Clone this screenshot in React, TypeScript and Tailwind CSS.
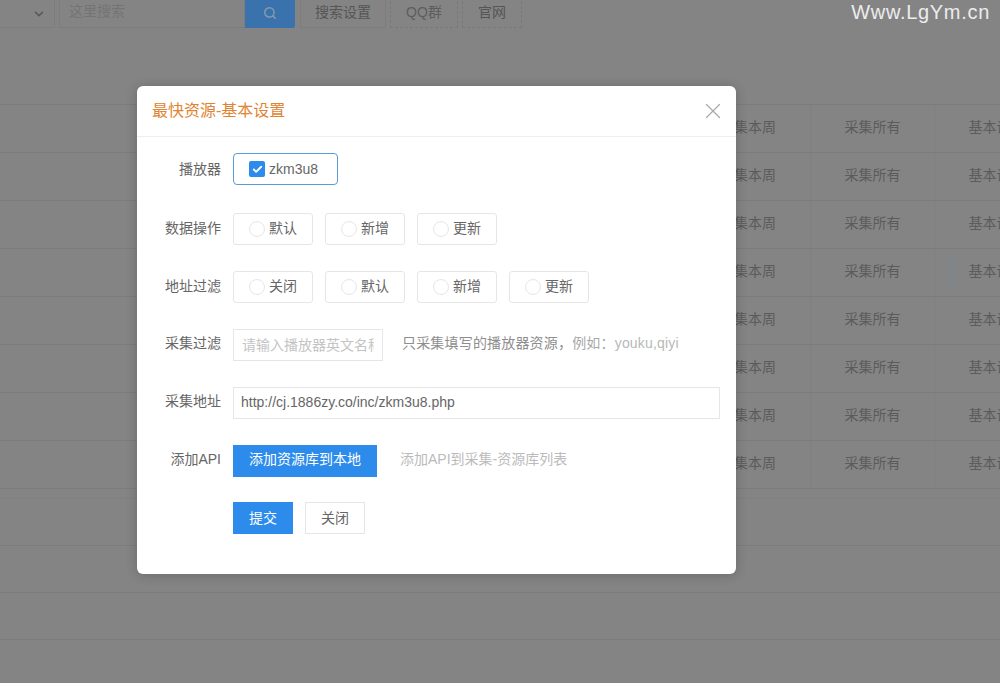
import React from 'react';
import { ChevronDown, Search, X, Check } from 'lucide-react';

const font = "font-['Liberation_Sans','Noto_Sans_CJK_SC',sans-serif]";

const Row = ({ label, mt, lift, children }: { label: string; mt: string; lift: string; children: React.ReactNode }) => (
  <div className={`flex items-center h-8 ${mt}`}>
    <label className={`w-[84px] text-right text-sm text-[#666] shrink-0 ${lift}`}>{label}</label>
    <div className="ml-3 flex items-center flex-1 min-w-0">{children}</div>
  </div>
);

const Radio = ({ text }: { text: string }) => (
  <div className="w-20 h-8 mr-3 pl-[15px] pb-[2px] flex items-center border border-[#e6e6e6] rounded-[3px] text-sm text-[#666] shrink-0">
    <span className="w-4 h-4 mr-1 mt-[2px] rounded-full border border-[#e6e6e6] shrink-0" />
    {text}
  </div>
);

const TableRow = ({ filled }: { filled: boolean }) => (
  <div className="h-12 border-b border-[#b2b2b2] grid grid-cols-[686px_124px_124px_124px] text-sm text-[#838383]">
    <div />
    {filled && (
      <>
        <div className="pb-[3px] flex items-center justify-center">采集本周</div>
        <div className="pb-[3px] flex items-center justify-center border-l border-[#b8b8b8]">采集所有</div>
        <div className="pb-[3px] flex items-center justify-center border-l border-[#b8b8b8] whitespace-nowrap">基本设置</div>
      </>
    )}
  </div>
);

export default function App() {
  return (
    <div className={`relative w-full h-[683px] overflow-hidden bg-[#bebebe] ${font}`}>
      <div className="h-7 flex items-end text-sm text-[#7a7a7a]">
        <div className="w-[55px] h-9 pt-2 flex items-center justify-end pr-2 border border-[#b4b4b4] border-l-0 shrink-0">
          <ChevronDown size={14} className="text-[#7a7a7a]" strokeWidth={2.5} />
        </div>
        <div className="ml-1 w-[186px] h-9 pl-[9px] pb-[6px] flex items-end border border-[#b4b4b4] text-[#a6a6a6]">这里搜索</div>
        <div className="w-[50px] h-9 pb-2 flex items-end justify-center bg-[#54a4f8] text-[#c4dcf4] rounded-br-[2px]">
          <Search size={14} strokeWidth={2.5} />
        </div>
        <div className="ml-[5px] w-[86px] h-9 pb-[5px] flex items-end justify-center border border-[#b4b4b4]">搜索设置</div>
        <div className="ml-1 w-[68px] h-9 pb-[5px] flex items-end justify-center border border-dashed border-[#aeaeae] text-[#868686]">QQ群</div>
        <div className="ml-1 w-[60px] h-9 pb-[5px] flex items-end justify-center border border-dashed border-[#aeaeae]">官网</div>
      </div>

      <div className="mt-[76px] border-t border-[#b2b2b2]">
        {[0, 1, 2, 3, 4, 5, 6, 7].map((i) => (
          <TableRow key={i} filled />
        ))}
        <div className="h-[10px] border-b border-[#b8b8b8]" />
        <div className="h-[47px] border-b border-[#b2b2b2]" />
        <div className="h-[47px] border-b border-[#b2b2b2]" />
        <div className="h-[47px] border-b border-[#b2b2b2]" />
      </div>

      <div className="absolute left-[951px] top-[256px] w-[2px] h-8 bg-[#abc1d6]" />

      {/* shade */}
      <div className="absolute inset-0 bg-black/30" />

      <div className="absolute left-[137px] top-[86px] w-[599px] h-[488px] bg-white rounded-md shadow-[0_1px_12px_rgba(0,0,0,0.2)]">
        <div className="h-[51px] pl-[15px] pr-[10px] flex items-center justify-between border-b border-[#eeeeee]">
          <span className="text-base text-[#df8433]">最快资源-基本设置</span>
          <X size={26} strokeWidth={1.2} className="text-[#aaaaaa]" />
        </div>

        <Row label="播放器" mt="mt-4" lift="">
          <div className="w-[105px] h-8 pl-[15px] flex items-center border border-[#5a9bd5] rounded-[4px] text-sm text-[#666]">
            <span className="w-4 h-4 mr-1 rounded-[2px] bg-[#2d8ceb] flex items-center justify-center text-white">
              <Check size={11} strokeWidth={4} />
            </span>
            zkm3u8
          </div>
        </Row>

        <Row label="数据操作" mt="mt-7" lift="pb-[2px]">
          <Radio text="默认" />
          <Radio text="新增" />
          <Radio text="更新" />
        </Row>

        <Row label="地址过滤" mt="mt-[26px]" lift="pb-[2px]">
          <Radio text="关闭" />
          <Radio text="默认" />
          <Radio text="新增" />
          <Radio text="更新" />
        </Row>

        <Row label="采集过滤" mt="mt-[26px]" lift="pb-1">
          <input
            readOnly
            placeholder="请输入播放器英文名称"
            className="w-[150px] h-8 px-2 border border-[#e6e6e6] text-sm outline-none placeholder:text-[#c4c4c4]"
          />
          <span className="ml-[19px] pb-[5px] text-sm tracking-[0.18px] text-[#8e8e8e] whitespace-nowrap">
            只采集填写的播放器资源，<span className="text-[#a8a8a8]">例如：</span>
            <span className="text-[#b8b8b8]">youku,qiyi</span>
          </span>
        </Row>

        <Row label="采集地址" mt="mt-[26px]" lift="pb-1">
          <input
            readOnly
            value="http://cj.1886zy.co/inc/zkm3u8.php"
            className="w-[487px] h-8 pl-[7px] pb-[2px] border border-[#e6e6e6] text-sm text-[#666] outline-none"
          />
        </Row>

        <Row label="添加API" mt="mt-[26px]" lift="pb-1">
          <button className="w-36 h-8 pb-1 bg-[#2d8ceb] text-white text-sm">添加资源库到本地</button>
          <span className="ml-[23px] pb-[5px] text-sm text-[#bbbbbb] whitespace-nowrap">添加API到采集-资源库列表</span>
        </Row>

        <Row label="" mt="mt-[25px]" lift="">
          <button className="w-[60px] h-8 bg-[#2d8ceb] text-white text-sm">提交</button>
          <button className="ml-3 w-[60px] h-8 border border-[#e6e6e6] text-[#666] text-sm">关闭</button>
        </Row>
      </div>

      <div className="absolute right-[10px] top-0 h-6 flex items-center text-xl tracking-[0.7px] text-[#ececec]">Www.LgYm.cn</div>
    </div>
  );
}
